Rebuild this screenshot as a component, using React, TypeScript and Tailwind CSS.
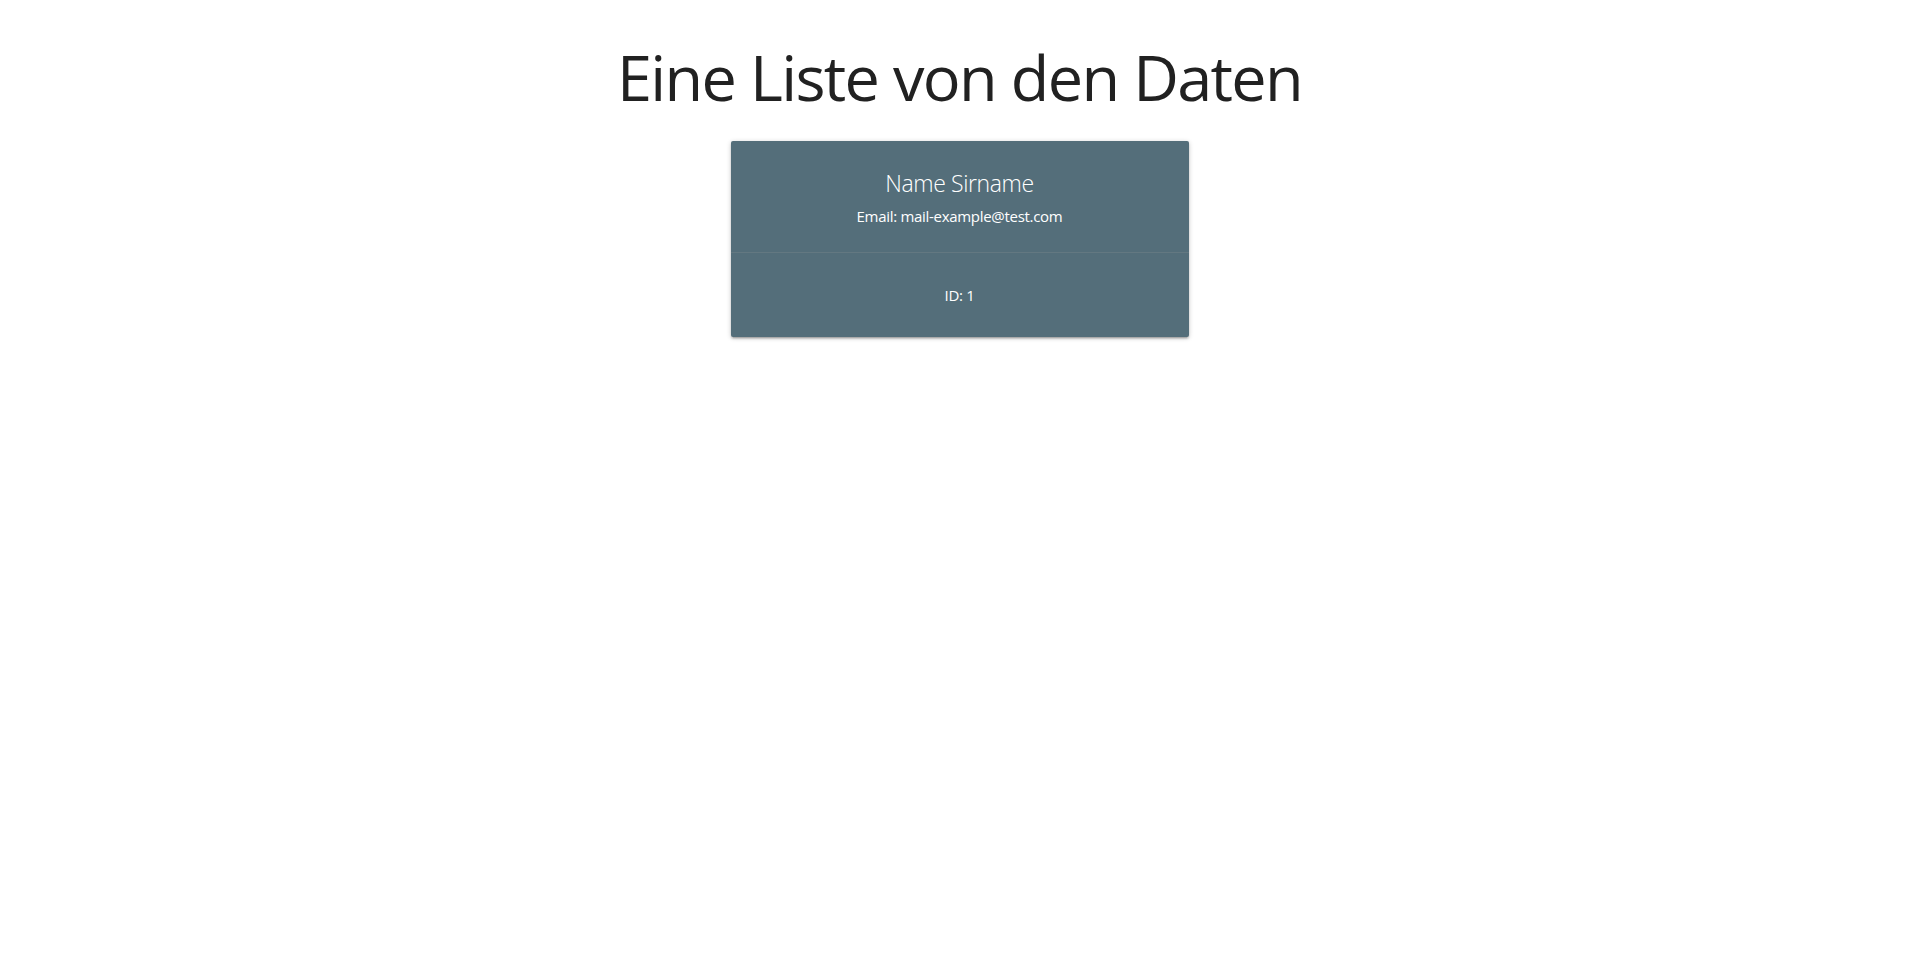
import React from 'react';

interface Person {
    id: number;
    name: string;
    email: string;
}

const people: Person[] = [{ id: 1, name: 'Name Sirname', email: 'mail-example@test.com' }];

const PersonCard: React.FC<{ person: Person }> = ({ person }) => (
    <div className="w-[458px] bg-[#546e7a] text-white rounded-[2px] shadow-[0_2px_2px_0_rgba(0,0,0,0.14),0_3px_1px_-2px_rgba(0,0,0,0.12),0_1px_5px_0_rgba(0,0,0,0.2)]">
        <div className="h-[111px] flex flex-col items-center pt-[26px]">
            <span className="text-[23px] font-light leading-[32px] tracking-[-0.4px]">{person.name}</span>
            <p className="text-[15px] leading-[22px] mt-[6px] tracking-[-0.3px]">Email: {person.email}</p>
        </div>
        <div className="h-[85px] border-t border-[rgba(160,160,160,0.2)] flex items-center justify-center">
            <p className="text-[15px] leading-[22px] tracking-[-0.3px]">ID: {person.id}</p>
        </div>
    </div>
);

export default function App() {
    return (
        <div className="min-h-screen bg-white font-['Open_Sans',sans-serif] text-[#212121]">
            <h1 className="text-center text-[63px] font-normal leading-[69px] pt-[42px] tracking-[-1.65px]">
                Eine Liste von den Daten
            </h1>
            <div className="flex justify-center mt-[30px]">
                {people.map((p) => (
                    <PersonCard key={p.id} person={p} />
                ))}
            </div>
        </div>
    );
}
